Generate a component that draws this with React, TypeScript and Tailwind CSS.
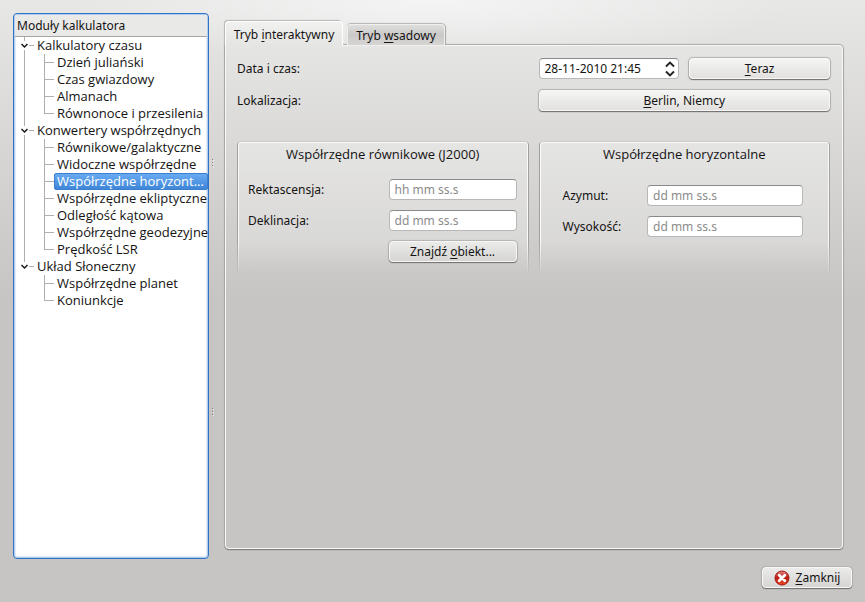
import { useState } from "react";
import type { ReactNode } from "react";

type Group = { name: string; items: string[] };

const groups: Group[] = [
  {
    name: "Kalkulatory czasu",
    items: ["Dzień juliański", "Czas gwiazdowy", "Almanach", "Równonoce i przesilenia"],
  },
  {
    name: "Konwertery współrzędnych",
    items: [
      "Równikowe/galaktyczne",
      "Widoczne współrzędne",
      "Współrzędne horyzont...",
      "Współrzędne ekliptyczne",
      "Odległość kątowa",
      "Współrzędne geodezyjne",
      "Prędkość LSR",
    ],
  },
  { name: "Układ Słoneczny", items: ["Współrzędne planet", "Koniunkcje"] },
];

const buttonShape =
  "h-[21px] rounded-[4px] border border-[#f7f7f6] bg-linear-to-b text-center leading-[17px] shadow-[0_1px_1px_#6f6e6d,0_0_1px_1px_#b4b3b1]";
const lightButton = `${buttonShape} from-[#f5f5f4] to-[#e2e1e0]`;
const duskButton = `${buttonShape} from-[#ebebea] to-[#d6d5d3]`;
const fieldLook =
  "h-[21px] min-w-0 rounded-[4px] border border-[#b9b8b7] border-t-[#8b8a89] bg-white px-[5px] outline-none placeholder:text-[#8c8b8a]";

function ExpandMark({ last }: { last: boolean }) {
  return (
    <svg width="21" height="17" viewBox="0 0 21 17" className="shrink-0" aria-hidden="true">
      <path d="M9.5 0V4" stroke="#b0afae" />
      {!last && <path d="M9.5 13V17" stroke="#b0afae" />}
      <path d="M14 8.5H19" stroke="#b0afae" />
      <path d="M6.5 7L9.5 10L12.5 7" fill="none" stroke="#1b1a19" strokeWidth="1.5" />
    </svg>
  );
}

function Branch({ last, groupLast }: { last: boolean; groupLast: boolean }) {
  return (
    <span className="flex h-full w-[39px] shrink-0 pl-[9px]" aria-hidden="true">
      <span className={groupLast ? "w-5" : "w-5 border-l border-[#b0afae]"} />
      <span className="flex w-[10px] flex-col">
        <span className="h-[9px] border-b border-l border-[#b0afae]" />
        <span className={last ? "h-2" : "h-2 border-l border-[#b0afae]"} />
      </span>
    </span>
  );
}

function ModuleTree() {
  const [selected, setSelected] = useState("Współrzędne horyzont...");
  return (
    <nav
      aria-label="Moduły kalkulatora"
      className="flex w-49 shrink-0 flex-col rounded-[4px] border border-[#2f73c6] bg-white shadow-[inset_0_0_0_1px_#b4cdee,inset_0_0_1px_2px_#dfeaf8]"
    >
      <h2 className="mx-px mt-px h-[22px] border-b border-[#a6a5a4] bg-[#e9e9e8] px-[2px] leading-[21px]">
        Moduły kalkulatora
      </h2>
      <ul className="pl-px font-['Open_Sans','Noto_Sans',sans-serif] text-[13px]">
        {groups.map((group, g) => {
          const groupLast = g === groups.length - 1;
          return (
            <li key={group.name}>
              <button type="button" className="flex h-[17px] w-full items-center gap-px text-left">
                <ExpandMark last={groupLast} />
                <span className="leading-[17px]">{group.name}</span>
              </button>
              <ul>
                {group.items.map((item, i) => (
                  <li key={item} className="flex h-[17px]">
                    <Branch last={i === group.items.length - 1} groupLast={groupLast} />
                    <button
                      type="button"
                      onClick={() => setSelected(item)}
                      className={
                        item === selected
                          ? "min-w-0 flex-1 rounded-[2px] border border-[#3c7fd0] bg-linear-to-b from-[#68abf3] to-[#3f86d8] pl-[2px] text-left leading-[15px] whitespace-nowrap text-white"
                          : "min-w-0 flex-1 border border-transparent pl-[2px] text-left leading-[15px] whitespace-nowrap"
                      }
                    >
                      {item}
                    </button>
                  </li>
                ))}
              </ul>
            </li>
          );
        })}
      </ul>
    </nav>
  );
}

function Dots() {
  return (
    <span className="flex flex-col gap-[2px]">
      <span className="size-px bg-[#858483] shadow-[1px_1px_0_#eeeeed]" />
      <span className="size-px bg-[#858483] shadow-[1px_1px_0_#eeeeed]" />
      <span className="size-px bg-[#858483] shadow-[1px_1px_0_#eeeeed]" />
    </span>
  );
}

function GroupFrame({ title, children }: { title: string; children: ReactNode }) {
  return (
    <section className="relative h-[134px]">
      <div className="pointer-events-none absolute inset-0 rounded-[4px] border border-b-0 border-[#a1a09f] border-t-[#cbcac9] bg-linear-to-b from-[#ececeb]/60 to-[#e4e4e3]/40 mask-linear-180 mask-linear-from-75% mask-linear-to-100% shadow-[inset_1px_1px_0_#fafafa,inset_-1px_0_0_#fafafa]" />
      <div className="relative">
        <h3 className="pt-[5px] text-center font-['Open_Sans','Noto_Sans',sans-serif] text-[13px] leading-[17px]">
          {title}
        </h3>
        {children}
      </div>
    </section>
  );
}

function SpinArrows() {
  return (
    <span className="flex w-[17px] flex-col">
      <button type="button" aria-label="Później" className="flex h-[9px] items-end justify-center">
        <svg width="10" height="7" viewBox="0 0 10 7" aria-hidden="true">
          <path d="M1 5.5L5 1.5L9 5.5" fill="none" stroke="#242322" strokeWidth="1.9" />
        </svg>
      </button>
      <button type="button" aria-label="Wcześniej" className="flex h-[9px] items-end justify-center">
        <svg width="10" height="7" viewBox="0 0 10 7" aria-hidden="true">
          <path d="M1 1.5L5 5.5L9 1.5" fill="none" stroke="#242322" strokeWidth="1.9" />
        </svg>
      </button>
    </span>
  );
}

export default function App() {
  return (
    <div className="flex min-h-screen flex-col bg-[radial-gradient(ellipse_360px_64px_at_50%_0,#f4f4f4,transparent),linear-gradient(#e7e7e6,#c7c5c3_300px)] pt-[13px] pr-[13px] pb-[14px] pl-3 font-['Noto_Sans','Open_Sans',sans-serif] text-[12px] leading-[17px] text-[#141312]">
      <main className="flex flex-1 pl-px">
        <ModuleTree />
        <div className="flex w-4 shrink-0 flex-col justify-between pt-[146px] pb-36 pl-[3px]" aria-hidden="true">
          <Dots />
          <Dots />
        </div>
        <div className="flex min-w-0 flex-1 flex-col pt-2 pr-[9px] pb-[10px]">
          <div role="tablist" className="relative z-10 -mb-px flex items-end gap-1">
            <button
              type="button"
              role="tab"
              aria-selected="true"
              className="h-[25px] w-[118px] rounded-t-[4px] border border-b-0 border-white bg-linear-to-b from-[#f1f1f0] to-[#e5e5e4] shadow-[-1px_-1px_1px_#b5b4b3]"
            >
              Tryb <u className="underline-offset-2">i</u>nteraktywny
            </button>
            <button
              type="button"
              role="tab"
              aria-selected="false"
              className="mb-px h-[21px] w-[98px] rounded-t-[4px] border border-b-0 border-[#f0f0ef] bg-linear-to-b from-[#dededd] via-[#cac9c8] to-[#d6d5d4] shadow-[0_-1px_1px_#b5b4b3,1px_0_1px_#a5a4a3]"
            >
              Tryb <u className="underline-offset-2">w</u>sadowy
            </button>
          </div>
          <div
            role="tabpanel"
            className="flex-1 rounded-[4px] rounded-tl-none border border-[#f8f8f8] bg-[linear-gradient(#e5e5e4,#c7c5c3_255px)] pt-3 pr-3 pl-[11px] shadow-[0_1px_1px_#7c7b7a,0_0_1px_1px_#a9a8a7]"
          >
            <div className="grid grid-cols-2 items-center gap-x-[10px] gap-y-[11px]">
              <label htmlFor="when">Data i czas:</label>
              <div className="grid grid-cols-2 items-center gap-[10px]">
                <div className="flex h-[21px] rounded-[4px] border border-[#b9b8b7] border-t-[#8b8a89] bg-white">
                  <input id="when" defaultValue="28-11-2010 21:45" className="min-w-0 flex-1 pl-[5px] outline-none" />
                  <SpinArrows />
                </div>
                <button type="button" className={lightButton}>
                  <u className="underline-offset-2">T</u>eraz
                </button>
              </div>
              <label htmlFor="place">Lokalizacja:</label>
              <button id="place" type="button" className={lightButton}>
                <u className="underline-offset-2">B</u>erlin, Niemcy
              </button>
            </div>
            <div className="mt-[30px] grid grid-cols-2 gap-[10px]">
              <GroupFrame title="Współrzędne równikowe (J2000)">
                <div className="mt-4 grid grid-cols-[1fr_128px] items-center gap-y-[10px] pr-3 pl-[11px]">
                  <label htmlFor="ra">Rektascensja:</label>
                  <input id="ra" placeholder="hh mm ss.s" className={fieldLook} />
                  <label htmlFor="dec">Deklinacja:</label>
                  <input id="dec" placeholder="dd mm ss.s" className={fieldLook} />
                  <button type="button" className={`${duskButton} col-start-2`}>
                    Znajdź <u className="underline-offset-2">o</u>biekt...
                  </button>
                </div>
              </GroupFrame>
              <GroupFrame title="Współrzędne horyzontalne">
                <div className="mt-[22px] grid grid-cols-[1fr_156px] items-center gap-y-[10px] pr-[27px] pl-6">
                  <label htmlFor="az">Azymut:</label>
                  <input id="az" placeholder="dd mm ss.s" className={fieldLook} />
                  <label htmlFor="alt">Wysokość:</label>
                  <input id="alt" placeholder="dd mm ss.s" className={fieldLook} />
                </div>
              </GroupFrame>
            </div>
          </div>
        </div>
      </main>
      <footer className="mt-2 flex justify-end">
        <button type="button" className={`${duskButton} flex w-[90px] items-center justify-center gap-[6px]`}>
          <svg width="16" height="16" viewBox="0 0 16 16" aria-hidden="true">
            <defs>
              <linearGradient id="close-fill" x1="0" y1="0" x2="0" y2="1">
                <stop offset="0" stopColor="#e58a80" />
                <stop offset="0.45" stopColor="#bb1a12" />
                <stop offset="1" stopColor="#ee4a20" />
              </linearGradient>
            </defs>
            <circle cx="8" cy="8" r="7" fill="url(#close-fill)" stroke="#a01612" />
            <path
              d="M5.2 5.2L10.8 10.8M10.8 5.2L5.2 10.8"
              stroke="#fff"
              strokeWidth="2.8"
              strokeLinecap="round"
            />
          </svg>
          <span>
            <u className="underline-offset-2">Z</u>amknij
          </span>
        </button>
      </footer>
    </div>
  );
}
